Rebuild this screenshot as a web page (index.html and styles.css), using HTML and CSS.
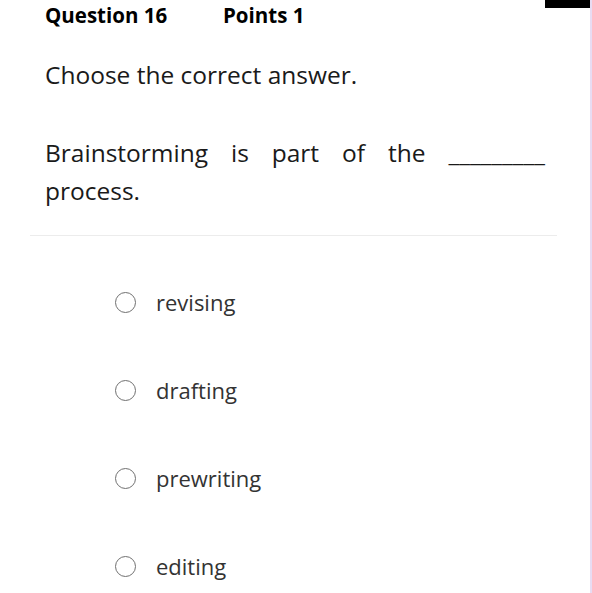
FILE: index.html
```html
<!DOCTYPE html>
<html>
<head>
<meta charset="utf-8">
<link rel="stylesheet" href="styles.css">
</head>
<body>
<div class="topmark"></div>
<div class="edge"></div>
<div class="page">
  <div class="header">
    <span class="qnum">Question 16</span>
    <span class="points">Points 1</span>
  </div>
  <p class="prompt">Choose the correct answer.</p>
  <p class="question">Brainstorming is part of the <span class="blank">_________</span> process.</p>
  <hr class="sep">
  <ul class="options">
    <li class="option"><span class="radio"></span><span class="label">revising</span></li>
    <li class="option"><span class="radio"></span><span class="label">drafting</span></li>
    <li class="option"><span class="radio"></span><span class="label">prewriting</span></li>
    <li class="option"><span class="radio"></span><span class="label">editing</span></li>
  </ul>
</div>
</body>
</html>
```

FILE: styles.css
```css
html, body {
  margin: 0;
  padding: 0;
  background: #fff;
}
body {
  font-family: "Open Sans", "Noto Sans", sans-serif;
  color: #1a1a1a;
  width: 592px;
  height: 593px;
  overflow: hidden;
  position: relative;
}
.topmark {
  position: absolute;
  top: 0;
  left: 545px;
  width: 46px;
  height: 8px;
  background: #000;
}
.edge {
  position: absolute;
  top: 0;
  right: 0;
  width: 2px;
  height: 593px;
  background: #e8dcf3;
}
.page {
  padding: 0 0 0 30px;
  width: 527px;
}
.header {
  display: flex;
  padding: 1px 0 0 15px;
  font-weight: 700;
  font-size: 20.5px;
  line-height: 28px;
  color: #000;
}
.qnum {
  width: 178px;
}
.prompt {
  margin: 30px 0 0 15px;
  font-size: 24.5px;
  line-height: 32px;
  color: #1a1a1a;
}
.question {
  margin: 43px 12px 0 15px;
  font-size: 24.5px;
  line-height: 38px;
  text-align: justify;
  color: #1a1a1a;
}
.sep {
  margin: 25px 0 0 0;
  border: 0;
  border-top: 1px solid #ececec;
  height: 0;
}
.options {
  list-style: none;
  margin: 0;
  padding: 52px 0 0 85px;
  display: flex;
  flex-direction: column;
  gap: 60px;
}
.option {
  display: flex;
  align-items: center;
  height: 28px;
}
.radio {
  width: 21px;
  height: 21px;
  border: 1.5px solid #707070;
  border-radius: 50%;
  margin-right: 20px;
  box-sizing: border-box;
}
.label {
  font-size: 22px;
  color: #333;
}
```
